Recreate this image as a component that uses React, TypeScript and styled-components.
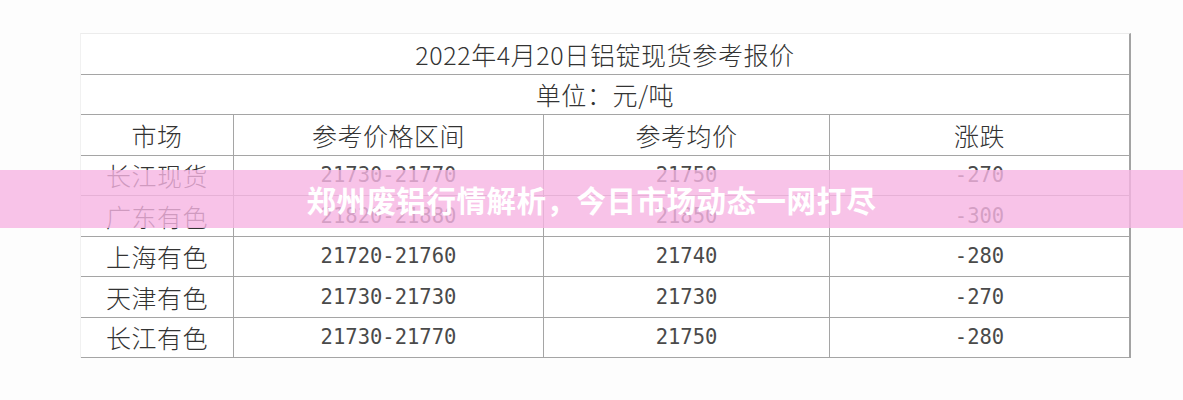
import React from "react";
import styled, { createGlobalStyle } from "styled-components";

const GlobalStyle = createGlobalStyle`
  html, body {
    margin: 0;
    padding: 0;
    background: #ffffff;
  }
`;

type Row = {
  market: string;
  range: string;
  avg: string;
  change: string;
};

const rows: Row[] = [
  { market: "长江现货", range: "21730-21770", avg: "21750", change: "-270" },
  { market: "广东有色", range: "21820-21880", avg: "21850", change: "-300" },
  { market: "上海有色", range: "21720-21760", avg: "21740", change: "-280" },
  { market: "天津有色", range: "21730-21730", avg: "21730", change: "-270" },
  { market: "长江有色", range: "21730-21770", avg: "21750", change: "-280" },
];

const Page = styled.div`
  position: relative;
  width: 1183px;
  height: 400px;
  box-sizing: border-box;
  padding: 33px 0 0 80px;
  background: #fdfdfd;
  overflow: hidden;
`;

const Sheet = styled.div`
  width: 1051px;
  display: flex;
  flex-direction: column;
  border-top: 1px solid #ececec;
  border-left: 1px solid #f1f1f1;
  border-right: 2px solid #a3a3a3;
  box-sizing: border-box;
  background: #ffffff;
`;

const WideRow = styled.div`
  height: 40.5px;
  box-sizing: border-box;
  border-bottom: 1.5px solid #a5a5a5;
  display: flex;
  align-items: center;
  justify-content: center;
  font-family: "Noto Sans CJK SC", "Noto Sans", sans-serif;
  font-weight: 300;
  font-size: 25px;
  color: #333333;
  letter-spacing: 0.6px;
`;

const GridRow = styled.div`
  height: 40.5px;
  box-sizing: border-box;
  border-bottom: 1.5px solid #a5a5a5;
  display: grid;
  grid-template-columns: 153px 310px 286px 1fr;
`;

const Cell = styled.div<{ $mono?: boolean; $last?: boolean }>`
  display: flex;
  align-items: center;
  justify-content: center;
  box-sizing: border-box;
  border-right: ${(p) => (p.$last ? "none" : "1.5px solid #a5a5a5")};
  color: ${(p) => (p.$mono ? "#4a4a4a" : "#333333")};
  font-family: ${(p) =>
    p.$mono
      ? `"DejaVu Sans Mono", "Liberation Mono", monospace`
      : `"Noto Sans CJK SC", "Noto Sans", sans-serif`};
  font-weight: ${(p) => (p.$mono ? 400 : 300)};
  font-size: ${(p) => (p.$mono ? "20.5px" : "25px")};
  letter-spacing: ${(p) => (p.$mono ? "0px" : "0.5px")};
`;

const Banner = styled.div`
  position: absolute;
  left: 0;
  right: 0;
  top: 170px;
  height: 58px;
  background: rgba(246, 180, 226, 0.8);
  display: flex;
  align-items: center;
  justify-content: center;
  color: #ffffff;
  font-family: "Noto Sans CJK SC", "Noto Sans", sans-serif;
  font-weight: 700;
  font-size: 29.5px;
  letter-spacing: 0.5px;
`;

export default function App() {
  return (
    <>
      <GlobalStyle />
      <Page>
        <Sheet>
          <WideRow>2022年4月20日铝锭现货参考报价</WideRow>
          <WideRow>单位：元/吨</WideRow>
          <GridRow>
            <Cell>市场</Cell>
            <Cell>参考价格区间</Cell>
            <Cell>参考均价</Cell>
            <Cell $last>涨跌</Cell>
          </GridRow>
          {rows.map((r, i) => (
            <GridRow key={i}>
              <Cell>{r.market}</Cell>
              <Cell $mono>{r.range}</Cell>
              <Cell $mono>{r.avg}</Cell>
              <Cell $mono $last>
                {r.change}
              </Cell>
            </GridRow>
          ))}
        </Sheet>
        <Banner>郑州废铝行情解析，今日市场动态一网打尽</Banner>
      </Page>
    </>
  );
}
